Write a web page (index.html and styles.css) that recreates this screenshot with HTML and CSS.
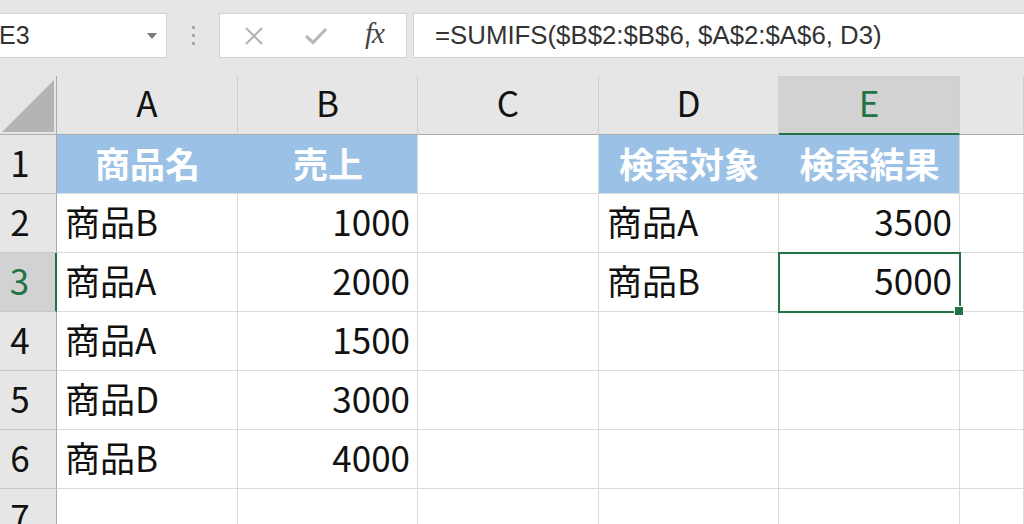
FILE: index.html
```html
<!DOCTYPE html>
<html lang="ja">
<head>
<meta charset="utf-8">
<title>SUMIFS</title>
<link rel="stylesheet" href="styles.css">
</head>
<body>
<div class="app">
  <div class="toolbar">
    <div class="namebox">
      <span class="namebox-text">E3</span>
      <span class="dropdown"></span>
    </div>
    <div class="grip"><span></span><span></span><span></span></div>
    <div class="buttons">
      <svg class="icon" width="20" height="18" viewBox="0 0 20 18"><path d="M2 1 L18 17 M18 1 L2 17" stroke="#b3b3b3" stroke-width="2" fill="none"/></svg>
      <svg class="icon" width="24" height="18" viewBox="0 0 24 18"><path d="M2 9 L9 15.5 L22 2" stroke="#b8b8b8" stroke-width="3.2" fill="none" stroke-linejoin="miter"/></svg>
      <span class="fx">fx</span>
    </div>
    <div class="formula">=SUMIFS($B$2:$B$6, $A$2:$A$6, D3)</div>
  </div>
  <div class="sheet">
    <div class="corner"><div class="tri"></div></div>
    <div class="colh">A</div>
    <div class="colh">B</div>
    <div class="colh">C</div>
    <div class="colh">D</div>
    <div class="colh sel">E</div>
    <div class="colh"></div>

    <div class="rowh">1</div>
    <div class="cell th">商品名</div>
    <div class="cell th">売上</div>
    <div class="cell"></div>
    <div class="cell th">検索対象</div>
    <div class="cell th">検索結果</div>
    <div class="cell"></div>

    <div class="rowh">2</div>
    <div class="cell">商品B</div>
    <div class="cell num">1000</div>
    <div class="cell"></div>
    <div class="cell">商品A</div>
    <div class="cell num">3500</div>
    <div class="cell"></div>

    <div class="rowh sel">3</div>
    <div class="cell">商品A</div>
    <div class="cell num">2000</div>
    <div class="cell"></div>
    <div class="cell">商品B</div>
    <div class="cell num active">5000</div>
    <div class="cell"></div>

    <div class="rowh">4</div>
    <div class="cell">商品A</div>
    <div class="cell num">1500</div>
    <div class="cell"></div>
    <div class="cell"></div>
    <div class="cell"></div>
    <div class="cell"></div>

    <div class="rowh">5</div>
    <div class="cell">商品D</div>
    <div class="cell num">3000</div>
    <div class="cell"></div>
    <div class="cell"></div>
    <div class="cell"></div>
    <div class="cell"></div>

    <div class="rowh">6</div>
    <div class="cell">商品B</div>
    <div class="cell num">4000</div>
    <div class="cell"></div>
    <div class="cell"></div>
    <div class="cell"></div>
    <div class="cell"></div>

    <div class="rowh">7</div>
    <div class="cell"></div>
    <div class="cell"></div>
    <div class="cell"></div>
    <div class="cell"></div>
    <div class="cell"></div>
    <div class="cell"></div>
  </div>
</div>
</body>
</html>
```

FILE: styles.css
```css
* { box-sizing: border-box; }
html, body {
  margin: 0;
  padding: 0;
  width: 1024px;
  height: 524px;
  overflow: hidden;
  background: #e6e6e6;
}
.app {
  width: 1024px;
  height: 524px;
  overflow: hidden;
  font-family: "Noto Sans CJK JP", "Noto Sans", sans-serif;
}
.toolbar {
  height: 76px;
  display: flex;
  align-items: flex-start;
  padding-top: 13px;
  background: #e6e6e6;
}
.namebox {
  width: 167px;
  height: 45px;
  background: #fff;
  border: 1px solid #d2d2d2;
  border-left: none;
  display: flex;
  align-items: center;
  justify-content: space-between;
  padding: 0 9px 0 0;
}
.namebox-text {
  font-family: "Liberation Sans", Arial, sans-serif;
  font-size: 25px;
  color: #333;
  margin-left: -1px;
}
.dropdown {
  width: 0;
  height: 0;
  border-left: 5.5px solid transparent;
  border-right: 5.5px solid transparent;
  border-top: 6px solid #7a7a7a;
  margin-top: 1px;
}
.grip {
  width: 52px;
  height: 45px;
  display: flex;
  flex-direction: column;
  align-items: center;
  justify-content: center;
  gap: 5px;
}
.grip span {
  width: 3px;
  height: 3px;
  background: #a8a8a8;
}
.buttons {
  width: 188px;
  height: 45px;
  background: #fff;
  border: 1px solid #d2d2d2;
  display: flex;
  align-items: center;
  padding-left: 24px;
}
.buttons .icon:first-child { margin-right: 40px; }
.buttons .icon:nth-child(2) { margin-right: 37px; }
.fx {
  font-family: "Liberation Serif", "Times New Roman", serif;
  font-style: italic;
  font-size: 29px;
  color: #444;
  letter-spacing: -1px;
  margin-top: -4px;
}
.formula {
  flex: 1;
  height: 45px;
  margin-left: 6px;
  background: #fff;
  border: 1px solid #d2d2d2;
  border-right: none;
  display: flex;
  align-items: center;
  padding-left: 21px;
  font-family: "Liberation Sans", Arial, sans-serif;
  font-size: 25.8px;
  color: #333;
  white-space: nowrap;
}
.sheet {
  display: grid;
  grid-template-columns: 57px 181px 180px 181px 180px 181px 64px;
  grid-auto-rows: 59px;
  background: #fff;
}
.corner {
  background: #e6e6e6;
  border-right: 1px solid #ababab;
  border-bottom: 1px solid #ababab;
  display: flex;
  justify-content: flex-end;
  align-items: flex-end;
  padding: 0 2px 2px 0;
}
.tri {
  width: 52px;
  height: 52px;
  background: #b4b4b4;
  clip-path: polygon(100% 0, 100% 100%, 0 100%);
}
.colh {
  background: #e6e6e6;
  border-right: 1px solid #d0d0d0;
  border-bottom: 1px solid #ababab;
  display: flex;
  align-items: center;
  justify-content: center;
  padding-bottom: 8px;
  font-size: 35px;
  line-height: 1;
  color: #111;
}
.colh.sel {
  background: #d2d2d2;
  color: #217346;
  border-bottom: 2px solid #217346;
  padding-bottom: 7px;
}
.rowh {
  background: #e6e6e6;
  border-right: 1px solid #ababab;
  border-bottom: 1px solid #c9c9c9;
  display: flex;
  align-items: center;
  justify-content: center;
  padding-right: 16px;
  padding-bottom: 6px;
  font-size: 35px;
  line-height: 1;
  color: #111;
}
.rowh.sel {
  background: #d2d2d2;
  color: #217346;
  border-right: 2px solid #217346;
}
.cell {
  border-right: 1px solid #dadada;
  border-bottom: 1px solid #dadada;
  display: flex;
  align-items: center;
  padding: 0 7px 6px 8px;
  font-size: 35px;
  line-height: 1;
  color: #111;
  white-space: nowrap;
}
.cell.num { justify-content: flex-end; }
.cell.th {
  background: #9bc2e6;
  color: #fff;
  font-weight: 700;
  justify-content: center;
  border-right-color: #9bc2e6;
  padding-bottom: 4px;
}
.cell.th + .cell.th { border-right-color: #dadada; }
.cell.active {
  position: relative;
  z-index: 2;
  outline: 2px solid #217346;
  outline-offset: -1px;
}
.cell.active::after {
  content: "";
  position: absolute;
  right: -5px;
  bottom: -5px;
  width: 8px;
  height: 8px;
  background: #217346;
  border: 1px solid #fff;
}
```
